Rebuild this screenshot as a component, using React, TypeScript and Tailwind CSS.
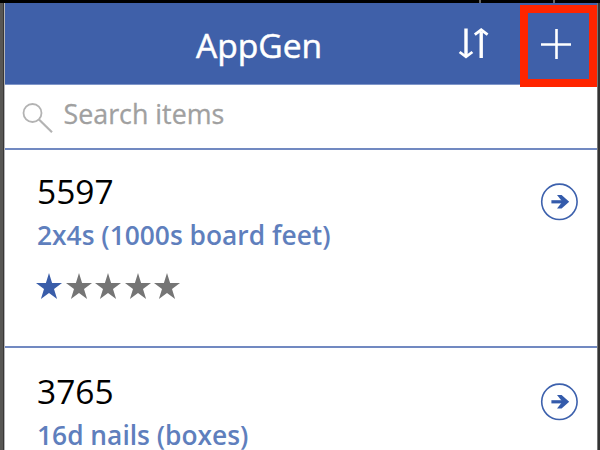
import React from 'react';

type Item = { code: string; name: string; rating: number };

const items: Item[] = [
  { code: '5597', name: '2x4s (1000s board feet)', rating: 1 },
  { code: '3765', name: '16d nails (boxes)', rating: 1 },
];

function SortIcon() {
  return (
    <svg className="h-[36px] w-[34px]" viewBox="0 0 34 36" fill="none" stroke="#fff" strokeWidth="3.4">
      <path d="M9 2.5V31M24.2 32V6" />
      <path d="M2.6 26L9 30.8L15.4 26M17.8 8.6L24.2 3.8L30.6 8.6" strokeWidth="2.8" />
    </svg>
  );
}

function Stars({ rating }: { rating: number }) {
  return (
    <div className="flex gap-[3.5px]">
      {[0, 1, 2, 3, 4].map((i) => (
        <svg key={i} className="h-[26px] w-[26px]" viewBox="0 0 26 26">
          <path
            d="M13 0L16.1 9.9H26L18 16L21.1 26L13 19.9L4.9 26L8 16L0 9.9H9.9Z"
            className={i < rating ? 'fill-[#3a5da9]' : 'fill-[#757575]'}
          />
        </svg>
      ))}
    </div>
  );
}

function ArrowIcon() {
  return (
    <svg className="mt-[33px] h-[38px] w-[38px] shrink-0" viewBox="0 0 38 38" fill="none">
      <circle cx="19.4" cy="18.8" r="17.7" stroke="#3d61ad" strokeWidth="1.6" />
      <path d="M11.4 18.8H26" stroke="#345bab" strokeWidth="3.2" />
      <path d="M17 12.1H21.6L29.2 18.8L21.6 25.5H17L22.4 18.8Z" fill="#345bab" />
    </svg>
  );
}

function Row({ item }: { item: Item }) {
  return (
    <li className="flex h-[198px] shrink-0 justify-between border-b-2 border-[#7189c1] pr-[19px] pl-[32px] last:pt-[2px]">
      <div className="flex flex-col">
        <div className="mt-[21px] h-[40px] text-[33.5px] leading-[40px] whitespace-nowrap text-black">{item.code}</div>
        <div className="mt-[7px] h-[34px] text-[26.35px] leading-[34px] font-semibold whitespace-nowrap text-[#5f7fbd]">
          {item.name}
        </div>
        <div className="mt-[21px] -ml-px">
          <Stars rating={item.rating} />
        </div>
      </div>
      <ArrowIcon />
    </li>
  );
}

export default function App() {
  return (
    <div className="flex h-[450px] w-[600px] flex-col overflow-hidden bg-black font-['Open_Sans','Noto_Sans',sans-serif]">
      <div className="flex h-[3px] shrink-0 bg-black pl-[479px]">
        <div className="w-[2px] bg-[#666]" />
        <div className="ml-[72px] w-[2px] bg-[#666]" />
      </div>
      <div className="flex min-h-0 grow">
        <div className="w-[4px] shrink-0 border-r border-[#383736] bg-[#575654]" />
        <main className="flex w-[593px] shrink-0 flex-col border-l border-[#b5b5b8] bg-white">
          <header className="flex h-[82px] shrink-0 items-center border-b border-[#7f96c9] bg-[#3f60a9] text-white">
            <h1 className="mt-[3px] ml-[191px] w-[261px] text-[33.6px] leading-[40px] whitespace-nowrap [-webkit-text-stroke:0.5px_white]">
              AppGen
            </h1>
            <SortIcon />
            <button className="relative ml-[37px] flex h-[66px] w-[61px] items-center justify-center">
              <svg className="mr-[6px] h-[32px] w-[32px]" viewBox="0 0 32 32" stroke="#fff" strokeWidth="2.6">
                <path d="M1 16.5H31M16.5 1V31" />
              </svg>
              <span className="absolute -inset-2 top-[-6px] bottom-[-10px] border-8 border-[#ff2500]" />
            </button>
          </header>
          <div className="flex h-[65px] shrink-0 items-center border-b-2 border-[#7189c1]">
            <svg className="mt-[2px] ml-[17px] h-[32px] w-[32px]" viewBox="0 0 32 32" fill="none" stroke="#b3b3b3">
              <circle cx="10.5" cy="11" r="9" strokeWidth="1.8" />
              <path d="M17 17.5L30 30.3" strokeWidth="2.2" />
            </svg>
            <div className="mt-[-5px] ml-[9.5px] text-[26.8px] leading-[36px] whitespace-nowrap text-[#a0a0a0] [-webkit-text-stroke:0.3px_#a0a0a0]">
              Search items
            </div>
          </div>
          <ul className="flex min-h-0 grow flex-col overflow-hidden">
            {items.map((item) => (
              <Row key={item.code} item={item} />
            ))}
          </ul>
        </main>
        <div className="grow border-l border-[#777] bg-[#333]" />
      </div>
    </div>
  );
}
